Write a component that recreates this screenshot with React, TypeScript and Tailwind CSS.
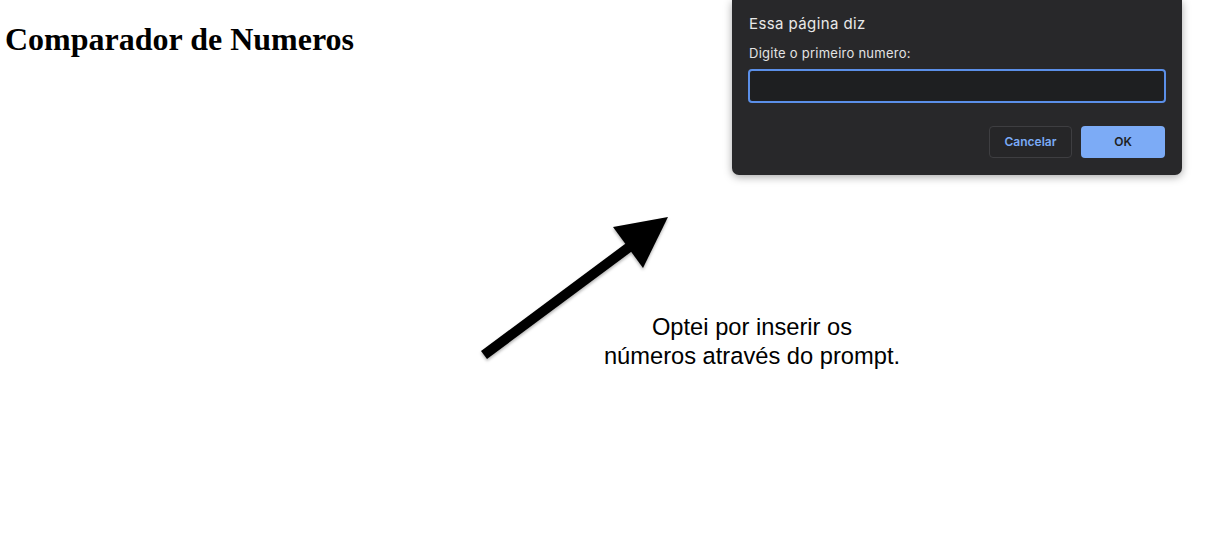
import React from "react";

function PromptDialog() {
  return (
    <div
      className="absolute left-[732px] top-0 w-[450px] h-[175px] bg-[#28282a] rounded-b-[7px] shadow-[0_2px_8px_rgba(0,0,0,0.35)] px-4 pt-[14px]"
      style={{ fontFamily: "Inter, 'Noto Sans', sans-serif" }}
    >
      <div className="pl-px text-[15px] leading-[20px] tracking-[0.4px] text-[#e8e8e8]">Essa página diz</div>
      <div className="mt-[11px] pl-px text-[13px] leading-[16px] tracking-[0.25px] text-[#e3e3e3]">Digite o primeiro numero:</div>
      <div className="mt-[8px] h-[34px] w-full rounded-[4px] border-2 border-[#5b8fe8] bg-[#1e1f21]" />
      <div className="mt-[23px] flex justify-end gap-[9px] pr-px">
        <button className="h-[32px] w-[83px] rounded-[4px] border border-[#3e3e41] bg-[#262628] text-[12px] font-semibold text-[#7aaaf6]">
          Cancelar
        </button>
        <button className="h-[32px] w-[84px] rounded-[4px] bg-[#7cabf6] text-[12px] font-semibold text-[#1e1f22]">
          OK
        </button>
      </div>
    </div>
  );
}

function Annotation() {
  return (
    <>
      <svg
        className="absolute left-[470px] top-[200px]"
        width="220"
        height="175"
        viewBox="0 0 220 175"
      >
        <defs>
          <filter id="sh" x="-20%" y="-20%" width="140%" height="140%">
            <feDropShadow dx="0" dy="2" stdDeviation="1.5" floodColor="#000" floodOpacity="0.3" />
          </filter>
        </defs>
        <g filter="url(#sh)">
          <line x1="14" y1="155" x2="162" y2="45" stroke="#000" strokeWidth="10" strokeLinecap="butt" />
          <polygon points="143,27 198,17 173,68" fill="#000" />
        </g>
      </svg>
      <div
        className="absolute left-[592px] top-[313px] w-[320px] text-center text-[23.7px] leading-[29px] text-black"
        style={{ fontFamily: "'Liberation Sans', Arial, sans-serif" }}
      >
        Optei por inserir os
        <br />
        números através do prompt.
      </div>
    </>
  );
}

export default function App() {
  return (
    <div className="relative w-full h-[551px] bg-white overflow-hidden pt-[21px]">
      <h1
        className="m-0 pl-[5px] text-[32px] font-bold leading-[37px] text-black"
        style={{ fontFamily: "'Liberation Serif', 'Times New Roman', serif" }}
      >
        Comparador de Numeros
      </h1>
      <PromptDialog />
      <Annotation />
    </div>
  );
}
